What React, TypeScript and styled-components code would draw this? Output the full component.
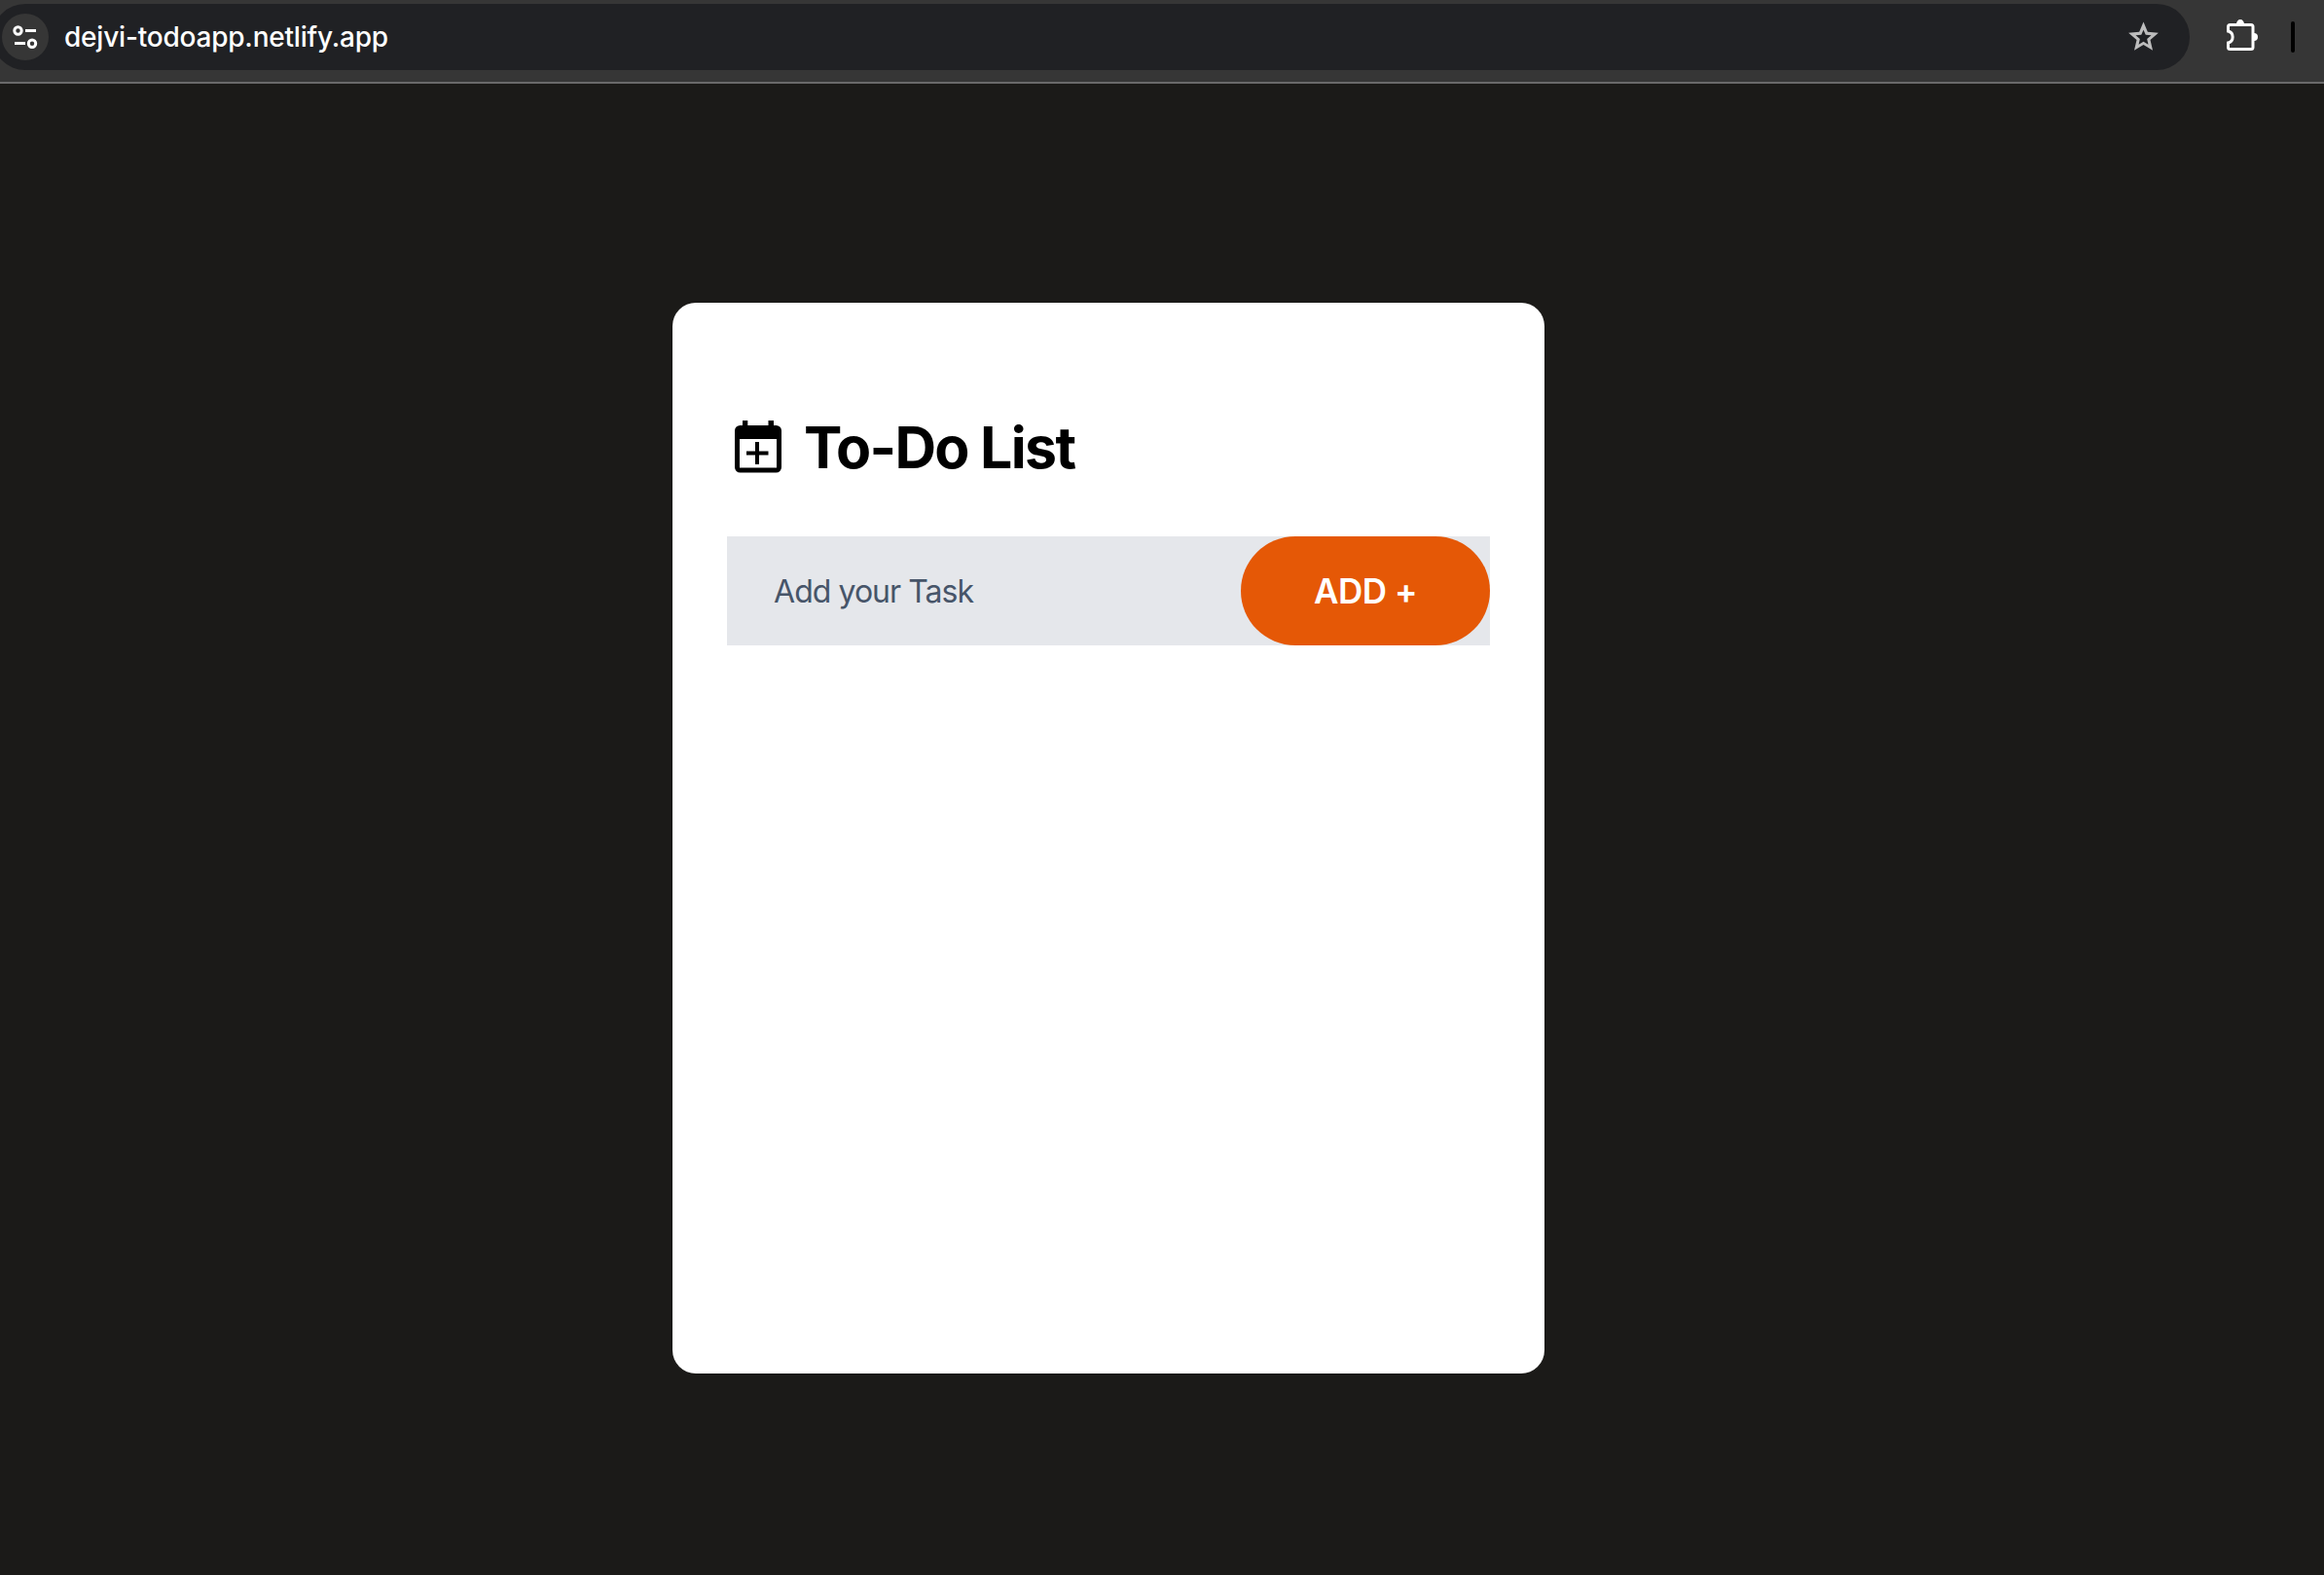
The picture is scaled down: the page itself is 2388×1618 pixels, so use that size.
import React from "react";
import styled, { createGlobalStyle } from "styled-components";

const GlobalStyle = createGlobalStyle`
  *, *::before, *::after { box-sizing: border-box; }
  body { margin: 0; background: #1b1a18; font-family: Inter, "Liberation Sans", sans-serif; }
`;

const Browser = styled.div`
  display: flex;
  flex-direction: column;
  width: 100%;
  height: 100vh;
  overflow: hidden;
`;

const Toolbar = styled.header`
  display: flex;
  align-items: flex-start;
  height: 86px;
  padding-top: 4px;
  background: #363636;
  border-bottom: 2px solid #6a6a6a;
`;

const AddressBar = styled.div`
  display: flex;
  align-items: center;
  width: 2258px;
  height: 68px;
  margin-left: -8px;
  padding: 0 29px 0 10px;
  border-radius: 34px;
  background: #202124;
`;

const SiteInfo = styled.div`
  width: 48px;
  height: 48px;
  border-radius: 50%;
  background: #363636;
`;

const Url = styled.span`
  flex: 1;
  margin-left: 16px;
  color: #fff;
  font-size: 28px;
  font-weight: 500;
  line-height: 36px;
  letter-spacing: -0.21px;
`;

const Icon = styled.svg`
  display: block;
  flex: none;
`;

const ExtensionButton = styled.div`
  margin: 12px 0 0 34px;
`;

const Divider = styled.div`
  width: 4px;
  height: 32px;
  margin: 18px 0 0 30px;
  border-radius: 2px;
  background: #000;
`;

const Page = styled.main`
  flex: 1;
  padding: 225px 0 0 691px;
  background: #1b1a18;
`;

const Card = styled.section`
  display: flex;
  flex-direction: column;
  width: 896px;
  height: 1100px;
  padding: 112px 56px 56px;
  border-radius: 24px;
  background: #fff;
`;

const Heading = styled.div`
  display: flex;
  align-items: center;
  height: 72px;
`;

const Title = styled.h1`
  margin: 2px 0 0 14px;
  color: #000;
  font-size: 59px;
  font-weight: 700;
  line-height: 72px;
  letter-spacing: -1.7px;
  white-space: nowrap;
`;

const TaskForm = styled.form`
  display: flex;
  height: 112px;
  margin-top: 56px;
  background: #e5e7eb;
`;

const TaskInput = styled.input`
  flex: 1;
  min-width: 0;
  padding: 0 16px 0 48px;
  border: 0;
  outline: 0;
  background: transparent;
  font-family: inherit;
  font-size: 32px;
  letter-spacing: -0.95px;
  &::placeholder {
    color: #475569;
    opacity: 1;
  }
`;

const AddButton = styled.button`
  width: 256px;
  height: 112px;
  padding: 0;
  border: 0;
  border-radius: 56px;
  background: #e55806;
  color: #fff;
  font-family: inherit;
  font-size: 35px;
  font-weight: 600;
  letter-spacing: -0.5px;
`;

const TuneIcon = () => (
  <Icon width="48" height="48" viewBox="0 0 48 48" fill="none" stroke="#fff" strokeWidth="3">
    <circle cx="16.5" cy="17.5" r="3.7" />
    <path d="M24 17.5h11M13 30.5h11" />
    <circle cx="31" cy="30.7" r="3.7" />
  </Icon>
);

const StarIcon = () => (
  <Icon width="37" height="37" viewBox="0 0 24 24" fill="#bdbdbd">
    <path
      d="M22 8.9l-7.190-.62L12 1.660 9.190 8.290 2 8.900l5.460 4.730L5.820 20.660 12 16.930l6.180 3.730-1.630-7.030L22 8.900zM12 14.750l-3.200 1.930.85-3.650-2.830-2.460 3.740-.32L12 6.900l1.450 3.350 3.740.32-2.830 2.460.85 3.650L12 14.750z"
    />
  </Icon>
);

const PuzzleIcon = () => (
  <Icon width="40" height="40" viewBox="0 0 40 40">
    <path
      d="M7.5 9.5H29a2 2 0 0 1 2 2v21a2 2 0 0 1-2 2H7.5a2 2 0 0 1-2-2V28a6.2 6.2 0 0 0 0-12v-4.500a2 2 0 0 1 2-2z"
      fill="none"
      stroke="#fff"
      strokeWidth="3"
    />
    <path d="M14 9a4 5 0 0 1 8 0zM32 18a4 4 0 0 1 0 8z" fill="#fff" />
  </Icon>
);

const CalendarIcon = () => (
  <Icon width="65" height="72" viewBox="0 0 65 72">
    <path
      fill="#000"
      fillRule="evenodd"
      d="M16 9h5.300v5H42.500V9H48v5h2.500a5.500 5.500 0 0 1 5.500 5.500v37.500a5.500 5.500 0 0 1-5.500 5.500h-37A5.500 5.500 0 0 1 8 57V19.500A5.500 5.500 0 0 1 13.500 14H16zM13 28v29.500h38V28z"
    />
    <path fill="#000" d="M29 31h4v9.500h9.500v4H33V54h-4v-9.500h-9v-4h9z" />
  </Icon>
);

export default function App() {
  return (
    <Browser>
      <GlobalStyle />
      <Toolbar>
        <AddressBar>
          <SiteInfo>
            <TuneIcon />
          </SiteInfo>
          <Url>dejvi-todoapp.netlify.app</Url>
          <StarIcon />
        </AddressBar>
        <ExtensionButton>
          <PuzzleIcon />
        </ExtensionButton>
        <Divider />
      </Toolbar>
      <Page>
        <Card>
          <Heading>
            <CalendarIcon />
            <Title>To-Do List</Title>
          </Heading>
          <TaskForm onSubmit={(e) => e.preventDefault()}>
            <TaskInput type="text" placeholder="Add your Task" />
            <AddButton>ADD +</AddButton>
          </TaskForm>
        </Card>
      </Page>
    </Browser>
  );
}
